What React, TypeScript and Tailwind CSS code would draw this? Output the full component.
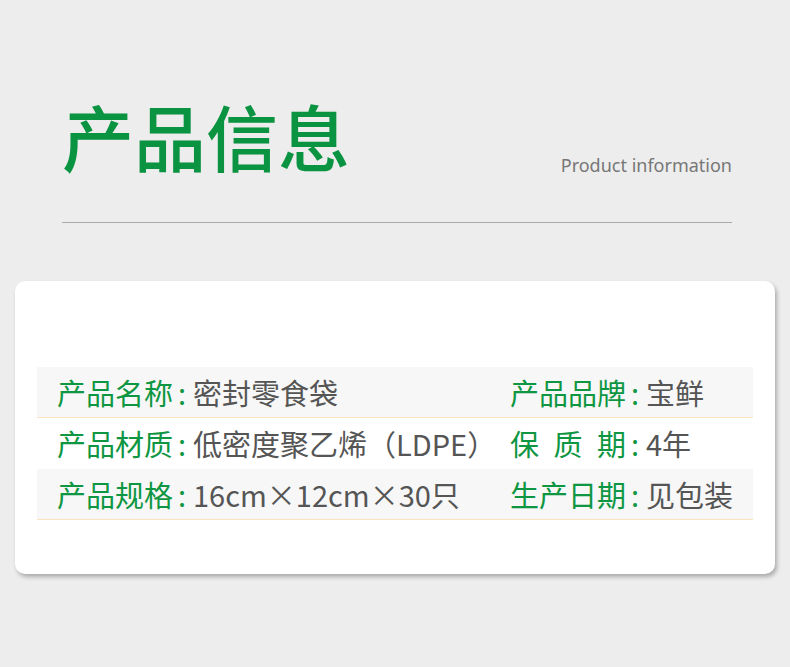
const GREEN = 'text-[#0e9642]';

const rows: { left: [string, string]; right: [string, string]; shaded: boolean }[] = [
  { left: ['产品名称', '密封零食袋'], right: ['产品品牌', '宝鲜'], shaded: true },
  { left: ['产品材质', '低密度聚乙烯（LDPE）'], right: ['保质期', '4年'], shaded: false },
  { left: ['产品规格', '16cm×12cm×30只'], right: ['生产日期', '见包装'], shaded: true },
];

function Label({ text }: { text: string }) {
  // 三个字的标签两端对齐到四个字的宽度
  if (text.length === 3) {
    return (
      <span className={`flex w-[116px] justify-between ${GREEN}`}>
        {text.split('').map((c) => (
          <span key={c}>{c}</span>
        ))}
      </span>
    );
  }
  return <span className={GREEN}>{text}</span>;
}

function Cell({ label, value, className = '' }: { label: string; value: string; className?: string }) {
  return (
    <div className={`flex items-center ${className}`}>
      <Label text={label} />
      <span className={`${GREEN} w-[20px] pl-[5px]`}>:</span>
      <span className="text-[#555555]">{value}</span>
    </div>
  );
}

export default function App() {
  return (
    <div
      className="h-[667px] w-[790px] overflow-hidden bg-[#ededed]"
      style={{ fontFamily: '"Noto Sans CJK SC", "Noto Sans", sans-serif' }}
    >
      <div className="ml-[62px] w-[670px] border-b border-[#a9a9a9] pt-[99px] pb-[51px]">
        <div className="flex items-end justify-between">
          <h1 className="text-[72px] leading-none font-medium text-[#0a9340]">产品信息</h1>
          <span
            className="mb-[-8px] text-[18px] text-[#777]"
            style={{ fontFamily: '"Noto Sans", sans-serif' }}
          >
            Product information
          </span>
        </div>
      </div>

      <div className="mx-[15px] mt-[58px] h-[293px] w-[760px] rounded-[10px] bg-white px-[22px] pt-[86px] shadow-[2px_3px_4px_rgba(0,0,0,0.28)]">
        {rows.map((r, i) => (
          <div
            key={i}
            className={`flex h-[51px] items-center pl-5 text-[29px] leading-none ${
              r.shaded ? 'border-b border-[#fbe3bd] bg-[#f7f7f7]' : 'bg-white'
            }`}
          >
            <Cell label={r.left[0]} value={r.left[1]} className="w-[453px]" />
            <Cell label={r.right[0]} value={r.right[1]} />
          </div>
        ))}
      </div>
    </div>
  );
}
